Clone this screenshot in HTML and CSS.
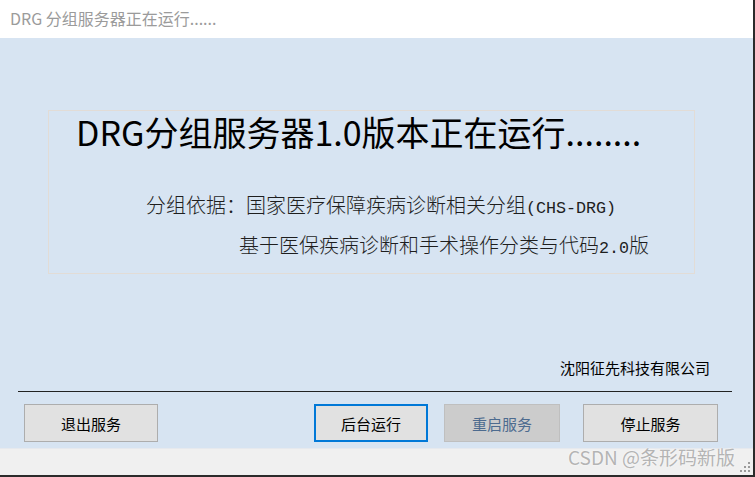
FILE: index.html
```html
<html>
<head>
<meta http-equiv="Content-Type" content="text/html; charset=utf-8">
<title>DRG 分组服务器正在运行......</title>
<link rel="stylesheet" href="styles.css">
</head>
<body>
<div class="window">
  <div class="titlebar">DRG 分组服务器正在运行......</div>

  <div class="client">
    <div class="panel">
      <div class="headline">DRG分组服务器1.0版本正在运行........</div>
      <div class="basis basis1">分组依据：国家医疗保障疾病诊断相关分组<span class="half">(CHS-DRG)</span></div>
      <div class="basis basis2">基于医保疾病诊断和手术操作分类与代码<span class="half">2.0</span>版</div>
    </div>

    <div class="company">沈阳征先科技有限公司</div>
    <div class="rule"></div>

    <div class="buttons">
      <button class="btn btn-exit">退出服务</button>
      <button class="btn btn-bg focused">后台运行</button>
      <button class="btn btn-restart" disabled>重启服务</button>
      <button class="btn btn-stop">停止服务</button>
    </div>
  </div>

  <div class="statusbar">
    <svg class="grip" width="12" height="12" viewBox="0 0 12 12">
      <rect x="9" y="1" width="2" height="2" fill="#9a9a9a"/>
      <rect x="5" y="5" width="2" height="2" fill="#9a9a9a"/>
      <rect x="9" y="5" width="2" height="2" fill="#9a9a9a"/>
      <rect x="1" y="9" width="2" height="2" fill="#9a9a9a"/>
      <rect x="5" y="9" width="2" height="2" fill="#9a9a9a"/>
      <rect x="9" y="9" width="2" height="2" fill="#9a9a9a"/>
    </svg>
  </div>

  <div class="watermark">CSDN @条形码新版</div>
</div>
</body>
</html>
```

FILE: styles.css
```css
html,body{
  margin:0;
  padding:0;
  background:#fff;
  font-family:"Noto Sans CJK SC", "Liberation Sans", sans-serif;
}

.window{
  position:relative;
  width:753px;
  height:475px;
  border-right:2px solid #2b2b2b;
  border-bottom:2px solid #2b2b2b;
  display:flex;
  flex-direction:column;
  overflow:hidden;
}

.titlebar{
  height:38px;
  box-sizing:border-box;
  padding:6px 0 0 10px;
  font-size:16px;
  line-height:24px;
  color:#9b9b9b;
  background:#fff;
}

.client{
  height:410px;
  background:#d7e4f2;
  display:flex;
  flex-direction:column;
}

/* framed message area */
.panel{
  margin:72px 0 0 48px;
  width:647px;
  height:164px;
  box-sizing:border-box;
  border:1px solid #e2dcd6;
}
.headline{
  padding:0 0 0 27px;
  font-size:34px;
  line-height:41px;
  color:#000;
  white-space:nowrap;
}
.basis{
  font-size:20px;
  line-height:36px;
  color:#1e1e1e;
  white-space:nowrap;
  font-weight:300;
}
.basis1{ margin-top:35px; padding-left:97px; }
.basis2{ padding-left:190px; }
.half{
  font-family:"Liberation Mono", monospace;
  font-size:16.7px;
}

.company{
  margin:83px 43px 0 0;
  text-align:right;
  font-size:15px;
  line-height:22px;
  color:#000;
}

.rule{
  margin:12px 21px 0 18px;
  height:0;
  border-top:1px solid #222;
}

.buttons{
  display:flex;
  margin-top:12px;
  padding-left:24px;
}
.btn{
  height:38px;
  box-sizing:border-box;
  background:#e1e1e1;
  border:1px solid #adadad;
  font-family:"Noto Sans CJK SC", sans-serif;
  font-size:15px;
  color:#000;
  padding:0;
}
.btn-exit{ width:134px; }
.btn-bg{ width:114px; margin-left:156px; }
.btn-restart{ width:116px; margin-left:16px; }
.btn-stop{ width:135px; margin-left:23px; }
.focused{ border:2px solid #0078d7; }
.btn:disabled{
  background:#cccccc;
  border-color:#bfbfbf;
  color:#4d6b8f;
}

.statusbar{
  flex:1;
  background:#f0f0f0;
  border-top:1px solid #e6e9ee;
  position:relative;
}
.grip{
  position:absolute;
  right:2px;
  bottom:2px;
}

.watermark{
  position:absolute;
  left:568px;
  top:444px;
  font-size:19px;
  line-height:26px;
  color:#b4b4b4;
  text-shadow:0 0 2px #fff;
  white-space:nowrap;
}
```
